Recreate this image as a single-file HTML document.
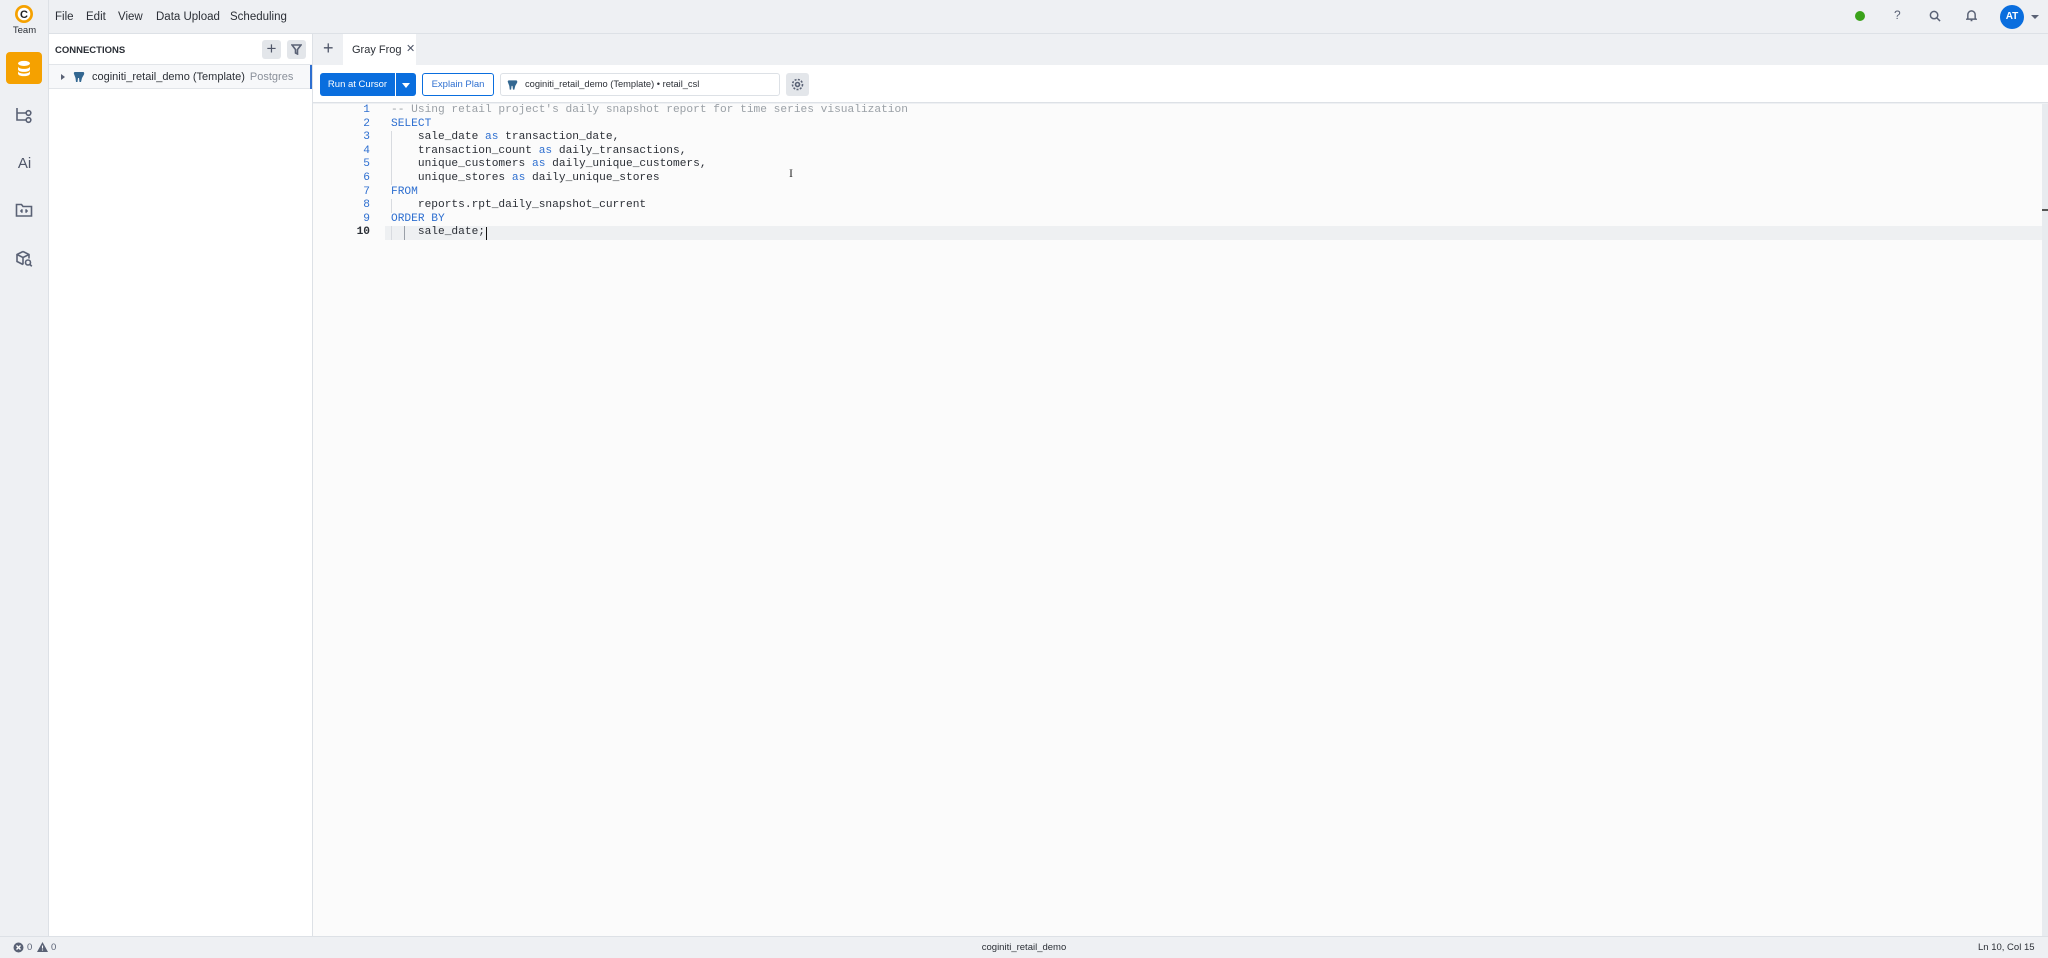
<!DOCTYPE html>
<html><head><meta charset="utf-8"><style>
*{box-sizing:border-box;margin:0;padding:0}
body{width:2048px;height:958px;overflow:hidden;background:#eef0f3;font-family:"Liberation Sans",sans-serif;position:relative;color:#2b2f36}
.abs{position:absolute}
.menu span{position:absolute;top:11px;font-size:11.5px;color:#2b2f36}
.code{font-family:"Liberation Mono",monospace;font-size:11.2px;line-height:13.6px;white-space:pre;color:#2b2f36}
.kw{color:#2e6fd0}
.cm{color:#9aa0a6}
.ln{font-family:"Liberation Mono",monospace;font-size:11.2px;line-height:13.6px;color:#2e6fd0;text-align:right;width:30px}
.ic{stroke:#5a6275;fill:none;stroke-width:1.6}
</style></head><body>
<div class="abs" style="left:0;top:0;width:49px;height:936px;background:#eef0f3;border-right:1px solid #dde1e6"></div>
<svg class="abs" style="left:14px;top:4px" width="20" height="20" viewBox="0 0 20 20"><circle cx="10" cy="10" r="9" fill="#f5a100"/><circle cx="10" cy="10" r="6.3" fill="#fff"/><text x="10" y="14" text-anchor="middle" font-family="Liberation Sans" font-weight="bold" font-size="11" fill="#222">C</text></svg>
<div class="abs" style="left:0;top:25px;width:49px;text-align:center;font-size:9.5px;color:#2b2f36">Team</div>
<div class="abs" style="left:6px;top:52px;width:36px;height:32px;background:#f5a100;border-radius:4px"></div>
<svg class="abs" style="left:17px;top:60px" width="14" height="17" viewBox="0 0 16 20"><ellipse cx="8" cy="4" rx="7" ry="3" fill="#fff"/><path d="M1 7.5c0 1.7 3 3 7 3s7-1.3 7-3v3.5c0 1.7-3 3-7 3s-7-1.3-7-3z" fill="#fff"/><path d="M1 13c0 1.7 3 3 7 3s7-1.3 7-3v3c0 1.7-3 3-7 3s-7-1.3-7-3z" fill="#fff"/></svg>
<svg class="abs" style="left:15px;top:106px" width="18" height="18" viewBox="0 0 18 18"><path class="ic" d="M2 2v12h9M2 7h9"/><circle class="ic" cx="13.5" cy="7" r="2.3"/><circle class="ic" cx="13.5" cy="14" r="2.3"/></svg>
<div class="abs" style="left:0;top:155px;width:49px;text-align:center;font-size:15px;color:#4f5668">Ai</div>
<svg class="abs" style="left:15px;top:202px" width="18" height="16" viewBox="0 0 18 16"><path class="ic" d="M1.5 2.5h5l1.5 2h8.5v9.5h-15z"/><path class="ic" d="M7.5 7.5l-1.5 1.5 1.5 1.5M10.5 7.5l1.5 1.5-1.5 1.5"/></svg>
<svg class="abs" style="left:15px;top:250px" width="18" height="18" viewBox="0 0 18 18"><path class="ic" d="M8 1.5l6 3v4M8 1.5l-6 3v7l6 3M2 4.5l6 3 6-3M8 7.5v7"/><circle class="ic" cx="13" cy="12.5" r="2.5"/><path class="ic" d="M15 14.5l1.8 1.8"/></svg>
<div class="menu">
<span style="left:55px">File</span><span style="left:86px">Edit</span><span style="left:118px">View</span><span style="left:156px">Data Upload</span><span style="left:230px">Scheduling</span>
</div>
<div class="abs" style="left:1855px;top:11px;width:10px;height:10px;border-radius:50%;background:#3aa21a"></div>
<div class="abs" style="left:1894px;top:8px;font-size:12px;color:#5a6275">?</div>
<svg class="abs" style="left:1929px;top:10px" width="12" height="12" viewBox="0 0 13 13"><circle class="ic" cx="5.5" cy="5.5" r="4"/><path class="ic" d="M8.5 8.5l3.5 3.5"/></svg>
<svg class="abs" style="left:1966px;top:9px" width="11" height="13" viewBox="0 0 12 14"><path class="ic" d="M2 10V6a4 4 0 018 0v4l1 1H1zM5 12.5h2"/></svg>
<div class="abs" style="left:2000px;top:5px;width:24px;height:24px;border-radius:50%;background:#0a6ede;color:#fff;font-size:10px;font-weight:bold;text-align:center;line-height:24px">AT</div>
<div class="abs" style="left:2031px;top:15px;width:0;height:0;border-left:4px solid transparent;border-right:4px solid transparent;border-top:4px solid #5a6275"></div>
<div class="abs" style="left:49px;top:33px;width:264px;height:903px;background:#fff;border-top:1px solid #dde1e6;border-right:1px solid #dde1e6"></div>
<div class="abs" style="left:49px;top:64px;width:263px;height:1px;background:#e2e5e9"></div>
<div class="abs" style="left:55px;top:45px;font-size:9.5px;font-weight:bold;color:#2b2f36">CONNECTIONS</div>
<div class="abs" style="left:262px;top:40px;width:19px;height:19px;background:#e3e6ea;border-radius:3px;text-align:center;line-height:18px;font-size:17px;color:#4f5668">+</div>
<div class="abs" style="left:287px;top:40px;width:19px;height:19px;background:#e3e6ea;border-radius:3px"></div>
<svg class="abs" style="left:291px;top:44px" width="11" height="11" viewBox="0 0 11 11"><path class="ic" stroke-width="1.2" d="M1 1h9L6.5 5.5V10L4.5 9V5.5z"/></svg>
<div class="abs" style="left:49px;top:65px;width:263px;height:24px;background:#f7f8fa;border-bottom:1px solid #e2e5e9"></div>
<div class="abs" style="left:310px;top:65px;width:2px;height:24px;background:#2e6fd0"></div>
<div class="abs" style="left:61px;top:74px;width:0;height:0;border-top:3px solid transparent;border-bottom:3px solid transparent;border-left:4px solid #5a6275"></div>
<svg class="abs" style="left:73px;top:71px" width="12" height="12" viewBox="0 0 12 12"><path d="M2 1h8c1 0 1.5 1 1 2.5L9 7 8 11H6.5L6 7H5l-.5 4H3L2.5 7 1 3C.5 2 1 1 2 1z" fill="#336791"/></svg>
<div class="abs" style="left:92px;top:71px;font-size:11px;color:#2b2f36">coginiti_retail_demo (Template) <span style="color:#8a909a;margin-left:2px">Postgres</span></div>
<div class="abs" style="left:313px;top:33px;width:1735px;height:32px;background:#eef0f3;border-top:1px solid #dde1e6"></div>
<div class="abs" style="left:323px;top:38px;font-size:18px;color:#4f5668">+</div>
<div class="abs" style="left:343px;top:34px;width:73px;height:32px;background:#fff"></div>
<div class="abs" style="left:352px;top:44px;font-size:11px;color:#2b2f36">Gray Frog</div>
<div class="abs" style="left:406px;top:42px;font-size:11px;color:#4f5668">✕</div>
<div class="abs" style="left:313px;top:65px;width:1735px;height:38px;background:#fff;border-bottom:1px solid #dde1e6"></div>
<div class="abs" style="left:320px;top:73px;width:75px;height:23px;background:#0a6ede;border-radius:3px 0 0 3px;color:#fff;font-size:9.5px;text-align:center;line-height:23px">Run at Cursor</div>
<div class="abs" style="left:396px;top:73px;width:20px;height:23px;background:#0a6ede;border-radius:0 3px 3px 0"></div>
<div class="abs" style="left:402px;top:83px;border-left:4px solid transparent;border-right:4px solid transparent;border-top:5px solid #fff"></div>
<div class="abs" style="left:422px;top:73px;width:72px;height:23px;border:1px solid #0a6ede;border-radius:3px;color:#2e6fd0;font-size:9.5px;text-align:center;line-height:21px;background:#fff">Explain Plan</div>
<div class="abs" style="left:500px;top:73px;width:280px;height:23px;border:1px solid #dde1e6;border-radius:3px;background:#fff"></div>
<svg class="abs" style="left:507px;top:79px" width="11" height="12" viewBox="0 0 12 12"><path d="M2 1h8c1 0 1.5 1 1 2.5L9 7 8 11H6.5L6 7H5l-.5 4H3L2.5 7 1 3C.5 2 1 1 2 1z" fill="#336791"/></svg>
<div class="abs" style="left:525px;top:79px;font-size:9.3px;color:#2b2f36">coginiti_retail_demo (Template) • retail_csl</div>
<div class="abs" style="left:786px;top:73px;width:23px;height:23px;background:#e3e6ea;border-radius:3px"></div>
<svg class="abs" style="left:791px;top:78px" width="13" height="13" viewBox="0 0 13 13"><circle class="ic" stroke-width="1.2" cx="6.5" cy="6.5" r="2"/><circle class="ic" stroke-width="1.2" stroke-dasharray="2 1.4" cx="6.5" cy="6.5" r="5"/></svg>
<div class="abs" style="left:313px;top:104px;width:1729px;height:832px;background:#fbfbfb"></div>
<div class="abs" style="left:2042px;top:104px;width:6px;height:832px;background:#e8ebef"></div>
<div class="abs" style="left:2042px;top:209px;width:6px;height:2px;background:#555"></div>
<div class="abs" style="left:385px;top:226px;width:1657px;height:14px;background:#eef0f2"></div>
<div class="abs ln" style="left:340px;top:104px">1<br>2<br>3<br>4<br>5<br>6<br>7<br>8<br>9<br><b style="color:#2b2f36">10</b></div>
<div class="abs code" style="left:391px;top:104px"><span class="cm">-- Using retail project's daily snapshot report for time series visualization</span>
<span class="kw">SELECT</span>
    sale_date <span class="kw">as</span> transaction_date,
    transaction_count <span class="kw">as</span> daily_transactions,
    unique_customers <span class="kw">as</span> daily_unique_customers,
    unique_stores <span class="kw">as</span> daily_unique_stores
<span class="kw">FROM</span>
    reports.rpt_daily_snapshot_current
<span class="kw">ORDER BY</span>
    sale_date;</div>
<div class="abs" style="left:391px;top:131px;width:1px;height:54px;background:#d8dbe0"></div>
<div class="abs" style="left:391px;top:199px;width:1px;height:14px;background:#d8dbe0"></div>
<div class="abs" style="left:391px;top:226px;width:1px;height:14px;background:#d8dbe0"></div>
<div class="abs" style="left:404px;top:226px;width:1px;height:14px;background:#9aa0a8"></div>
<div class="abs" style="left:486px;top:227px;width:1px;height:13px;background:#111"></div>
<div class="abs" style="left:789px;top:166px;font-size:12px;color:#333;font-family:'Liberation Serif',serif">I</div>
<div class="abs" style="left:0;top:936px;width:2048px;height:22px;background:#eef0f3;border-top:1px solid #dde1e6"></div>
<svg class="abs" style="left:13px;top:942px" width="11" height="11" viewBox="0 0 11 11"><circle cx="5.5" cy="5.5" r="5" fill="#5a6275"/><path d="M3.5 3.5l4 4M7.5 3.5l-4 4" stroke="#fff" stroke-width="1.4"/></svg>
<div class="abs" style="left:27px;top:942px;font-size:9.5px;color:#5a6275">0</div>
<svg class="abs" style="left:37px;top:942px" width="11" height="10" viewBox="0 0 11 10"><path d="M5.5 0L11 10H0z" fill="#5a6275"/><path d="M5.5 3.5v3M5.5 7.5v1" stroke="#fff" stroke-width="1.1"/></svg>
<div class="abs" style="left:51px;top:942px;font-size:9.5px;color:#5a6275">0</div>
<div class="abs" style="left:0;top:942px;width:2048px;text-align:center;font-size:9.5px;color:#2b2f36">coginiti_retail_demo</div>
<div class="abs" style="left:1978px;top:942px;font-size:9.5px;color:#2b2f36">Ln 10, Col 15</div>
</body></html>
